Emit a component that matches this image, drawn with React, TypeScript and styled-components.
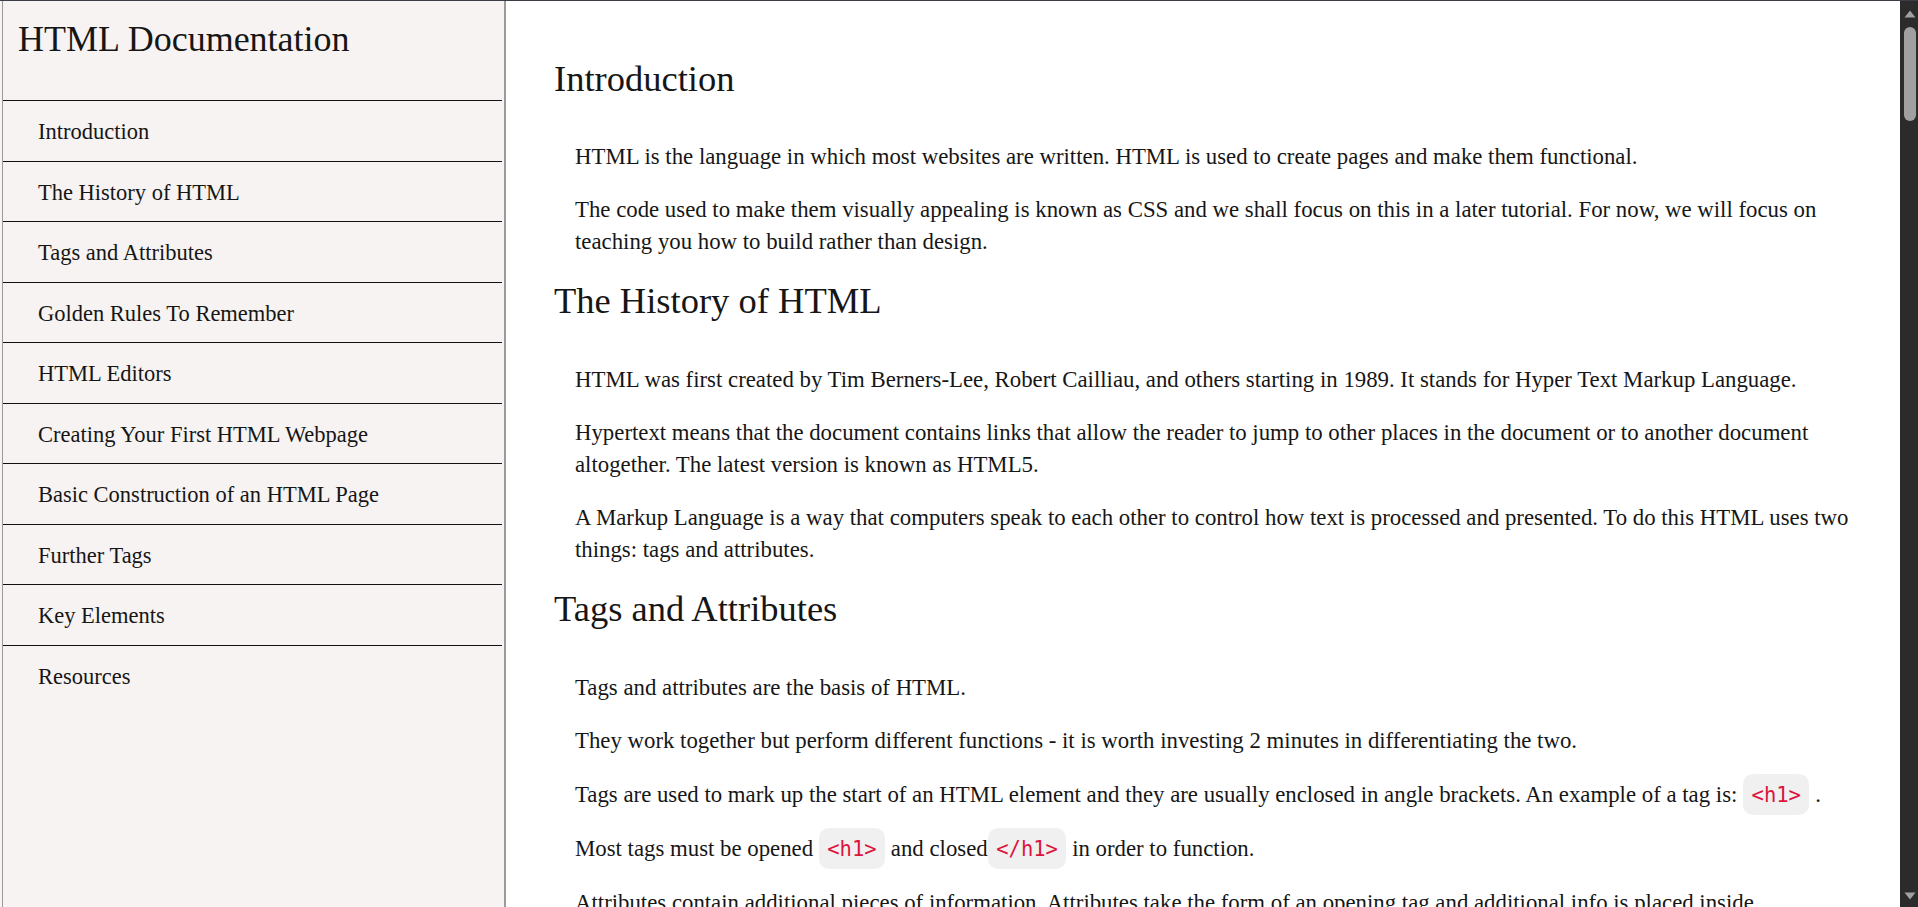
import React, { useCallback, useLayoutEffect, useRef, useState } from 'react';
import styled, { createGlobalStyle } from 'styled-components';

const TEXT = '#161616';
const NAV_BG = '#f6f3f2';
const FRAME_GREY = '#9a9a9a';
const CODE_RED = '#dc143c';
const CODE_BG = '#f0f0f0';
const RAIL_BG = '#2b2b2b';
const RAIL_FG = '#a0a0a0';
const RAIL_BUTTON = 26;

const GlobalStyle = createGlobalStyle`
  html,
  body {
    margin: 0;
    padding: 0;
    height: 100%;
    background: #fff;
    overflow: hidden;
  }
  body {
    font-family: 'Liberation Serif', 'Times New Roman', serif;
    color: ${TEXT};
  }
  #root {
    height: 100%;
  }
`;

const Page = styled.div`
  display: flex;
  height: 100vh;
  box-sizing: border-box;
  border-top: 1px solid #3b3e44;
`;

const Sidebar = styled.nav`
  flex: 0 0 506px;
  display: flex;
  box-sizing: border-box;
  padding: 0 2px 0 2px;
  background: ${NAV_BG};
  border-right: 2px solid ${FRAME_GREY};
`;

const SidebarInner = styled.div`
  flex: 1;
  display: flex;
  flex-direction: column;
  border-left: 1px solid ${FRAME_GREY};
`;

const SidebarHeader = styled.header`
  height: 99px;
  box-sizing: border-box;
  padding: 17px 0 0 15px;
`;

const SidebarTitle = styled.h1`
  margin: 0;
  font-size: 36px;
  line-height: 42px;
  font-weight: 400;
`;

const NavList = styled.ul`
  margin: 0;
  padding: 0;
  list-style: none;
`;

const NavItem = styled.li`
  border-top: 1px solid #111;
`;

const NavLink = styled.a`
  display: block;
  height: 59.5px;
  line-height: 61px;
  padding-left: 35px;
  font-size: 22.5px;
  color: ${TEXT};
  text-decoration: none;
`;

const Main = styled.main`
  flex: 1;
  overflow-y: auto;
  scrollbar-width: none;
  background: #fff;
  color: ${TEXT};
  box-sizing: border-box;
  padding: 56.5px 30px 100px 48px;

  &::-webkit-scrollbar {
    display: none;
  }
`;

const Rail = styled.div`
  flex: 0 0 18px;
  display: flex;
  flex-direction: column;
  box-sizing: border-box;
  padding: 0 2px 0 4px;
  background: ${RAIL_BG};
`;

const RailButton = styled.div<{ $down?: boolean }>`
  flex: 0 0 ${RAIL_BUTTON}px;
  display: flex;
  justify-content: center;
  align-items: ${(p) => (p.$down ? 'flex-start' : 'flex-end')};
  padding: ${(p) => (p.$down ? '11px 0 0' : '0 0 9px')};
  box-sizing: border-box;

  svg {
    display: block;
  }
`;

const RailTrack = styled.div`
  flex: 1;
  display: flex;
  flex-direction: column;
  overflow: hidden;
`;

const RailThumb = styled.div`
  flex: 0 0 auto;
  border-radius: 6px;
  background: ${RAIL_FG};
`;

const Section = styled.section`
  display: flex;
  flex-direction: column;
  & + & {
    margin-top: 1px;
  }
`;

const SectionTitle = styled.h2`
  margin: 0 0 41.4px;
  font-size: 36.5px;
  line-height: 42px;
  font-weight: 400;
`;

const Paragraph = styled.p`
  margin: 0 0 21.7px 21px;
  font-size: 22.8px;
  line-height: 31.7px;
`;

const Code = styled.code`
  font-family: 'DejaVu Sans Mono', 'Liberation Mono', monospace;
  font-size: 20.5px;
  color: ${CODE_RED};
  background: ${CODE_BG};
  padding: 8.5px;
  border-radius: 10px;
`;

const CodeBlock = styled.pre`
  margin: 0 0 21.7px 21px;
  padding: 18px 22px;
  background: ${CODE_BG};
  border-radius: 10px;
  font-family: 'DejaVu Sans Mono', 'Liberation Mono', monospace;
  font-size: 18px;
  line-height: 28px;
  color: ${CODE_RED};
  white-space: pre-wrap;
`;

const List = styled.ul`
  margin: 0 0 21.7px 21px;
  padding-left: 34px;
  font-size: 22.8px;
  line-height: 31.7px;

  li + li {
    margin-top: 8px;
  }
`;

const navItems = [
  'Introduction',
  'The History of HTML',
  'Tags and Attributes',
  'Golden Rules To Remember',
  'HTML Editors',
  'Creating Your First HTML Webpage',
  'Basic Construction of an HTML Page',
  'Further Tags',
  'Key Elements',
  'Resources',
];

const slug = (s: string) => s.replace(/\s+/g, '_');

const DocSection = ({ title, children }: { title: string; children: React.ReactNode }) => (
  <Section id={slug(title)}>
    <SectionTitle>{title}</SectionTitle>
    {children}
  </Section>
);

const Arrow = ({ down }: { down?: boolean }) => (
  <svg width="12" height="8" viewBox="0 0 12 8">
    <path d={down ? 'M0.5 0.5h11L6 7.5z' : 'M6 0.5l5.5 7H0.5z'} fill={RAIL_FG} />
  </svg>
);

const App = () => {
  const mainRef = useRef<HTMLElement>(null);
  const [thumb, setThumb] = useState({ top: 0, height: 92 });

  // the page's scrollbar is drawn by hand so that it shows in every browser
  const measure = useCallback(() => {
    const el = mainRef.current;
    if (!el) return;
    const track = el.clientHeight - RAIL_BUTTON * 2;
    const height = Math.max(24, (track * el.clientHeight) / el.scrollHeight);
    const range = el.scrollHeight - el.clientHeight;
    const top = range > 0 ? ((track - height) * el.scrollTop) / range : 0;
    setThumb({ top, height });
  }, []);

  useLayoutEffect(() => {
    measure();
    window.addEventListener('resize', measure);
    return () => window.removeEventListener('resize', measure);
  }, [measure]);

  return (
    <>
      <GlobalStyle />
      <Page>
        <Sidebar id="navbar">
          <SidebarInner>
            <SidebarHeader>
              <SidebarTitle>HTML Documentation</SidebarTitle>
            </SidebarHeader>
            <NavList>
              {navItems.map((item) => (
                <NavItem key={item}>
                  <NavLink href={`#${slug(item)}`}>{item}</NavLink>
                </NavItem>
              ))}
            </NavList>
          </SidebarInner>
        </Sidebar>

        <Main id="main-doc" ref={mainRef} onScroll={measure}>
          <DocSection title="Introduction">
            <Paragraph>
              HTML is the language in which most websites are written. HTML is used to create pages and make
              them functional.
            </Paragraph>
            <Paragraph>
              The code used to make them visually appealing is known as CSS and we shall focus on this in a
              later tutorial. For now, we will focus on teaching you how to build rather than design.
            </Paragraph>
          </DocSection>

          <DocSection title="The History of HTML">
            <Paragraph>
              HTML was first created by Tim Berners-Lee, Robert Cailliau, and others starting in 1989. It
              stands for Hyper Text Markup Language.
            </Paragraph>
            <Paragraph>
              Hypertext means that the document contains links that allow the reader to jump to other places
              in the document or to another document altogether. The latest version is known as HTML5.
            </Paragraph>
            <Paragraph>
              A Markup Language is a way that computers speak to each other to control how text is processed
              and presented. To do this HTML uses two things: tags and attributes.
            </Paragraph>
          </DocSection>

          <DocSection title="Tags and Attributes">
            <Paragraph>Tags and attributes are the basis of HTML.</Paragraph>
            <Paragraph>
              They work together but perform different functions - it is worth investing 2 minutes in
              differentiating the two.
            </Paragraph>
            <Paragraph>
              Tags are used to mark up the start of an HTML element and they are usually enclosed in angle
              brackets. An example of a tag is: <Code>&lt;h1&gt;</Code> .
            </Paragraph>
            <Paragraph>
              Most tags must be opened <Code>&lt;h1&gt;</Code> and closed<Code>&lt;/h1&gt;</Code> in order to
              function.
            </Paragraph>
            <Paragraph>
              Attributes contain additional pieces of information. Attributes take the form of an opening tag
              and additional info is placed inside.
            </Paragraph>
            <Paragraph>
              An example of an attribute is: <Code>&lt;img src="mydog.jpg" alt="A photo of my dog."&gt;</Code>
            </Paragraph>
            <Paragraph>
              In this instance, the image source (src) and the alt text (alt) are attributes of the{' '}
              <Code>&lt;img&gt;</Code> tag.
            </Paragraph>
          </DocSection>

          <DocSection title="Golden Rules To Remember">
            <Paragraph>
              Before we start writing our own pages, there are a few golden rules that will keep your HTML
              clean, valid and easy to maintain.
            </Paragraph>
            <List>
              <li>
                The vast majority of tags must be opened <Code>&lt;tag&gt;</Code> and closed{' '}
                <Code>&lt;/tag&gt;</Code> with the element information such as a title or text resting between
                the tags.
              </li>
              <li>
                When using multiple tags, the tags must be closed in the order in which they were opened. For
                example: <Code>&lt;strong&gt;&lt;em&gt;This is really important!&lt;/em&gt;&lt;/strong&gt;</Code>
              </li>
              <li>Write your tags and attributes in lowercase, it keeps your code consistent and readable.</li>
              <li>Always wrap the values of your attributes in quotation marks.</li>
              <li>Indent nested elements so that the structure of the page is visible at a glance.</li>
            </List>
            <Paragraph>
              Here is an example of tags that are nested correctly, next to tags that are not. The browser will
              often try to guess what you meant, but you should never rely on it:
            </Paragraph>
            <CodeBlock>{`<!-- Correct -->
<p>This is <strong>very <em>important</em></strong> text.</p>

<!-- Incorrect -->
<p>This is <strong>very <em>important</strong></em> text.</p>`}</CodeBlock>
            <Paragraph>
              A handful of elements, such as <Code>&lt;br&gt;</Code>, <Code>&lt;hr&gt;</Code>,{' '}
              <Code>&lt;img&gt;</Code> and <Code>&lt;meta&gt;</Code>, are empty elements. They have no content
              and therefore no closing tag.
            </Paragraph>
            <Paragraph>
              Finally, keep your code tidy. Comments, written between <Code>&lt;!--</Code> and{' '}
              <Code>--&gt;</Code>, are ignored by the browser and are a great way to leave notes for yourself
              and for anyone else who reads your code.
            </Paragraph>
            <Paragraph>
              When in doubt, run your page through a validator. It will list every unclosed tag, missing
              attribute or typo so that you can fix them one by one.
            </Paragraph>
          </DocSection>

          <DocSection title="HTML Editors">
            <Paragraph>
              Now that we've gotten the basic theory out of the way, it's time to learn how to build our first
              website.
            </Paragraph>
            <Paragraph>
              First off, we must ensure that we have the right tools. Most important, we need an HTML editor in
              which to write our code.
            </Paragraph>
            <Paragraph>
              For serious website building, it is recommended to use a dedicated code editor. Some of the most
              popular free options are:
            </Paragraph>
            <List>
              <li>Visual Studio Code — a fast, extensible editor from Microsoft with a huge library of add-ons.</li>
              <li>Sublime Text — a lightweight editor known for its speed and powerful multi-cursor editing.</li>
              <li>Atom — a hackable text editor built with web technologies.</li>
              <li>Brackets — an editor made for web design, with a live preview of your page in the browser.</li>
              <li>Notepad++ — a simple and popular editor for Windows.</li>
            </List>
            <Paragraph>
              They offer syntax highlighting, auto-completion and live previews of your work, and they will
              point out many mistakes before you even open the page in a browser.
            </Paragraph>
            <Paragraph>
              However, for our basic purposes, a simple text editor like Notepad (Windows) or TextEdit (Mac)
              will be more than sufficient. Whichever editor you choose, remember to save your files with the{' '}
              <Code>.html</Code> extension.
            </Paragraph>
            <Paragraph>
              If you prefer to work in the browser, online playgrounds such as CodePen, JSFiddle and Glitch let
              you write HTML and see the result instantly without installing anything.
            </Paragraph>
          </DocSection>

          <DocSection title="Creating Your First HTML Webpage">
            <Paragraph>
              First off, you need to open your HTML editor, where you will find a clean white page on which to
              write your code.
            </Paragraph>
            <Paragraph>
              From there you need to layout your page with the following tags. These tags should be placed
              underneath each other at the top of every HTML page that you create.
            </Paragraph>
            <CodeBlock>{`<!DOCTYPE html>
<html>
  <head>
    <title>My First Webpage</title>
  </head>
  <body>
    <h1>Hello world!</h1>
    <p>This is my first webpage.</p>
  </body>
</html>`}</CodeBlock>
            <Paragraph>To see your page in action, follow these steps:</Paragraph>
            <List>
              <li>Create a new folder on your computer for your website.</li>
              <li>Open your editor and paste the code above into a new file.</li>
              <li>
                Save the file inside your folder as <Code>index.html</Code>.
              </li>
              <li>Double-click the file, or drag it into an open browser window.</li>
            </List>
            <Paragraph>
              Congratulations - you have just built your very first webpage! Every time you make a change to the
              file, save it again and refresh the browser tab to see the result of your work.
            </Paragraph>
            <Paragraph>
              Try changing the text inside the <Code>&lt;h1&gt;</Code> and <Code>&lt;p&gt;</Code> tags, or add
              a second paragraph, and watch your page update.
            </Paragraph>
            <Paragraph>
              The file called <Code>index.html</Code> is special: when a visitor opens a folder on a web
              server, it is the page that the server sends back by default.
            </Paragraph>
          </DocSection>

          <DocSection title="Basic Construction of an HTML Page">
            <Paragraph>
              <Code>&lt;!DOCTYPE html&gt;</Code> — This tag specifies the language you will write on the page.
              In this case, the language is HTML 5.
            </Paragraph>
            <Paragraph>
              <Code>&lt;html&gt;</Code> — This tag signals that from here on we are going to write in HTML
              code. Its <Code>lang</Code> attribute tells the browser which human language the page is written
              in.
            </Paragraph>
            <Paragraph>
              <Code>&lt;head&gt;</Code> — This is where all the metadata for the page goes — stuff mostly
              meant for search engines and other computer programs.
            </Paragraph>
            <Paragraph>
              <Code>&lt;title&gt;</Code> — The text inside this tag is shown in the browser tab and is used by
              search engines as the title of your page in their results.
            </Paragraph>
            <Paragraph>
              <Code>&lt;meta&gt;</Code> — These tags describe the page: the character set it uses, how it
              should scale on mobile devices, a short description and much more.
            </Paragraph>
            <Paragraph>
              <Code>&lt;link&gt;</Code> — Connects the page to other files, most often the CSS stylesheet that
              controls how the page looks.
            </Paragraph>
            <Paragraph>
              <Code>&lt;body&gt;</Code> — This is where the content of the page goes: headings, paragraphs,
              images, links and everything else the visitor will see.
            </Paragraph>
            <CodeBlock>{`<!DOCTYPE html>
<html lang="en">
  <head>
    <meta charset="utf-8">
    <meta name="viewport" content="width=device-width, initial-scale=1">
    <meta name="description" content="My very first webpage">
    <title>Page title</title>
    <link rel="stylesheet" href="styles.css">
  </head>
  <body>
    <!-- page content -->
  </body>
</html>`}</CodeBlock>
            <Paragraph>
              Further tags are then placed inside the <Code>&lt;body&gt;</Code> tag to build up the content of
              the page, as we will see in the next section.
            </Paragraph>
          </DocSection>

          <DocSection title="Further Tags">
            <Paragraph>
              Inside the <Code>&lt;head&gt;</Code> tag, there is one tag that is always included:{' '}
              <Code>&lt;title&gt;</Code>, but there are others that are just as important.
            </Paragraph>
            <Paragraph>
              Headings are defined with the <Code>&lt;h1&gt;</Code> to <Code>&lt;h6&gt;</Code> tags.{' '}
              <Code>&lt;h1&gt;</Code> defines the most important heading and <Code>&lt;h6&gt;</Code> the least
              important.
            </Paragraph>
            <Paragraph>
              Paragraphs are defined with the <Code>&lt;p&gt;</Code> tag, links with the <Code>&lt;a&gt;</Code>{' '}
              tag and images with the <Code>&lt;img&gt;</Code> tag.
            </Paragraph>
            <CodeBlock>{`<h1>My Dog</h1>
<h2>His favourite things</h2>
<p>This is a paragraph about my dog.</p>
<a href="https://www.example.com">Visit my website</a>
<img src="mydog.jpg" alt="A photo of my dog.">`}</CodeBlock>
            <Paragraph>
              Links can point to another website, to another page of your own site, or to a section of the
              current page by using the <Code>id</Code> of an element:
            </Paragraph>
            <CodeBlock>{`<a href="https://developer.mozilla.org">MDN Web Docs</a>
<a href="about.html">About me</a>
<a href="#resources">Jump to the resources</a>
<a href="mailto:hello@example.com">Send me an email</a>`}</CodeBlock>
            <Paragraph>
              Lists can be ordered, using the <Code>&lt;ol&gt;</Code> tag, or unordered, using the{' '}
              <Code>&lt;ul&gt;</Code> tag. Each item inside a list is wrapped in an <Code>&lt;li&gt;</Code>{' '}
              tag.
            </Paragraph>
            <CodeBlock>{`<ul>
  <li>Coffee</li>
  <li>Tea</li>
  <li>Milk</li>
</ul>

<ol>
  <li>Wake up</li>
  <li>Make coffee</li>
  <li>Write some HTML</li>
</ol>`}</CodeBlock>
            <Paragraph>
              Tables are built row by row. The <Code>&lt;table&gt;</Code> tag wraps the whole table,{' '}
              <Code>&lt;tr&gt;</Code> defines a row, <Code>&lt;th&gt;</Code> a header cell and{' '}
              <Code>&lt;td&gt;</Code> a regular cell.
            </Paragraph>
            <CodeBlock>{`<table>
  <tr>
    <th>Name</th>
    <th>Breed</th>
  </tr>
  <tr>
    <td>Rex</td>
    <td>Labrador</td>
  </tr>
</table>`}</CodeBlock>
          </DocSection>

          <DocSection title="Key Elements">
            <Paragraph>
              Here is a short list of the elements you will use on almost every page you build.
            </Paragraph>
            <List>
              <li>
                <Code>&lt;div&gt;</Code> — a generic container used to group content together.
              </li>
              <li>
                <Code>&lt;span&gt;</Code> — an inline container used to mark up part of a text.
              </li>
              <li>
                <Code>&lt;strong&gt;</Code> and <Code>&lt;em&gt;</Code> — give text strong importance or
                emphasis.
              </li>
              <li>
                <Code>&lt;br&gt;</Code> — inserts a single line break.
              </li>
              <li>
                <Code>&lt;table&gt;</Code> — defines a table, built up from rows and cells.
              </li>
              <li>
                <Code>&lt;form&gt;</Code> — collects input from the user with fields and buttons.
              </li>
              <li>
                <Code>&lt;header&gt;</Code>, <Code>&lt;nav&gt;</Code>, <Code>&lt;main&gt;</Code> and{' '}
                <Code>&lt;footer&gt;</Code> — semantic elements that describe the parts of a page.
              </li>
            </List>
            <Paragraph>
              Semantic elements give your page a clear outline. A typical page is put together like this:
            </Paragraph>
            <CodeBlock>{`<body>
  <header>
    <h1>My Website</h1>
    <nav>
      <a href="#intro">Intro</a>
      <a href="#blog">Blog</a>
    </nav>
  </header>
  <main>
    <section id="intro">...</section>
    <article id="blog">...</article>
  </main>
  <footer>&copy; 2024 My Website</footer>
</body>`}</CodeBlock>
            <Paragraph>
              Forms deserve a special mention. They are made up of a <Code>&lt;form&gt;</Code> tag containing
              labels, inputs and a button that sends the data:
            </Paragraph>
            <CodeBlock>{`<form action="/subscribe" method="post">
  <label for="email">Email</label>
  <input id="email" type="email" name="email" required>
  <button type="submit">Subscribe</button>
</form>`}</CodeBlock>
            <Paragraph>
              Using the right element for the job makes your page easier to read for both people and search
              engines, and much more accessible to users of assistive technology.
            </Paragraph>
          </DocSection>

          <DocSection title="Resources">
            <Paragraph>
              All the documentation in this page is taken from a number of great resources. If you want to keep
              learning, these are a good place to start:
            </Paragraph>
            <List>
              <li>MDN Web Docs — HTML: HyperText Markup Language</li>
              <li>W3Schools — HTML Tutorial</li>
              <li>freeCodeCamp — Responsive Web Design Certification</li>
              <li>HTML Living Standard — WHATWG</li>
              <li>Code Academy — Learn HTML</li>
              <li>The W3C Markup Validation Service</li>
              <li>HTML Dog — HTML Beginner Tutorial</li>
              <li>Can I use — browser support tables for HTML, CSS and JavaScript</li>
              <li>web.dev — Learn HTML</li>
            </List>
            <Paragraph>
              Once you are comfortable with HTML, the natural next step is CSS, which we will cover in the next
              tutorial, followed by JavaScript to make your pages interactive.
            </Paragraph>
            <Paragraph>
              Keep practising, build small projects and, above all, have fun writing HTML!
            </Paragraph>
          </DocSection>
        </Main>

        <Rail aria-hidden="true">
          <RailButton>
            <Arrow />
          </RailButton>
          <RailTrack>
            <RailThumb style={{ marginTop: thumb.top, height: thumb.height }} />
          </RailTrack>
          <RailButton $down>
            <Arrow down />
          </RailButton>
        </Rail>
      </Page>
    </>
  );
};

export default App;
